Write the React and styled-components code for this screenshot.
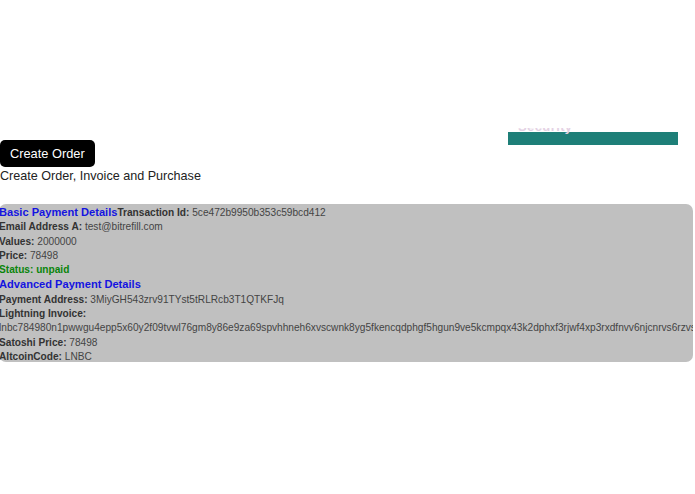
import React from "react";
import styled, { createGlobalStyle } from "styled-components";

const Global = createGlobalStyle`
  html, body { margin: 0; padding: 0; background: #fff; overflow: hidden; }
  body { font-family: "Liberation Sans", Arial, sans-serif; }
`;

const Page = styled.div`
  position: relative;
  width: 695px;
  height: 494px;
  padding-top: 140px;
  box-sizing: border-box;
`;

const NavClip = styled.div`
  position: absolute;
  top: 128px;
  left: 508px;
  width: 170px;
  height: 17px;
  overflow: hidden;
`;

const NavBar = styled.div`
  position: absolute;
  top: 4px;
  left: 0;
  right: 0;
  bottom: 0;
  background: #1e7f78;
`;

const NavText = styled.span`
  position: absolute;
  top: -9px;
  left: 10px;
  font-size: 13px;
  line-height: 16px;
  font-weight: bold;
  color: #e4d2e4;
  letter-spacing: 0.4px;
`;

const Button = styled.button`
  display: block;
  height: 27px;
  margin: 0;
  padding: 0 10px;
  border: none;
  border-radius: 5px;
  background: #000;
  color: #fff;
  font-family: "Liberation Sans", Arial, sans-serif;
  font-size: 12.8px;
  white-space: nowrap;
`;

const Caption = styled.div`
  font-size: 12.6px;
  line-height: 16px;
  color: #222;
  margin-top: 1px;
`;

const Box = styled.div`
  margin-top: 20px;
  margin-left: -1px;
  padding-top: 1px;
  width: 694px;
  height: 158px;
  background: #c0c0c0;
  border-radius: 7px;
  overflow: hidden;
  box-sizing: border-box;
`;

const Row = styled.div`
  font-size: 10.15px;
  line-height: 14.3px;
  color: #444;
`;

const Heading = styled.span`
  font-size: 11.1px;
  font-weight: bold;
  color: #1414e0;
`;

const Label = styled.b`
  color: #333;
`;

const Value = styled.span`
  color: #444;
`;

const Status = styled.b`
  color: #0a850a;
`;

const invoice =
  "lnbc784980n1pwwgu4epp5x60y2f09tvwl76gm8y86e9za69spvhhneh6xvscwnk8yg5fkencqdphgf5hgun9ve5kcmpqx43k2dphxf3rjwf4xp3rxdfnvv6njcnrvs6rzvscqzpgxqrrss9qypqsq";

export default function App() {
  return (
    <>
      <Global />
      <Page>
        <NavClip>
          <NavBar />
          <NavText>Security</NavText>
        </NavClip>
        <Button>Create Order</Button>
        <Caption>Create Order, Invoice and Purchase</Caption>
        <Box>
          <Row>
            <Heading>Basic Payment Details</Heading>
            <Label>Transaction Id: </Label>
            <Value>5ce472b9950b353c59bcd412</Value>
          </Row>
          <Row>
            <Label>Email Address A: </Label>
            <Value>test@bitrefill.com</Value>
          </Row>
          <Row>
            <Label>Values: </Label>
            <Value>2000000</Value>
          </Row>
          <Row>
            <Label>Price: </Label>
            <Value>78498</Value>
          </Row>
          <Row>
            <Status>Status: unpaid</Status>
          </Row>
          <Row>
            <Heading>Advanced Payment Details</Heading>
          </Row>
          <Row>
            <Label>Payment Address: </Label>
            <Value>3MiyGH543zrv91TYst5tRLRcb3T1QTKFJq</Value>
          </Row>
          <Row>
            <Label>Lightning Invoice: </Label>
            <Value>{invoice}</Value>
          </Row>
          <Row>
            <Label>Satoshi Price: </Label>
            <Value>78498</Value>
          </Row>
          <Row>
            <Label>AltcoinCode: </Label>
            <Value>LNBC</Value>
          </Row>
        </Box>
      </Page>
    </>
  );
}
